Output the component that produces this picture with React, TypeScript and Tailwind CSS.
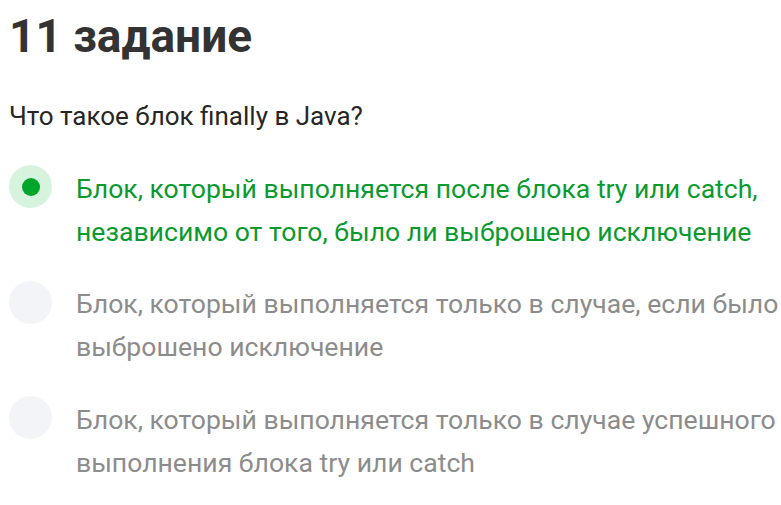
const options = [
  {
    text: 'Блок, который выполняется после блока try или catch, независимо от того, было ли выброшено исключение',
    correct: true,
  },
  {
    text: 'Блок, который выполняется только в случае, если было выброшено исключение',
    correct: false,
  },
  {
    text: 'Блок, который выполняется только в случае успешного выполнения блока try или catch',
    correct: false,
  },
]

export default function App() {
  return (
    <div className="min-h-[505px] w-[781px] bg-white pl-[9px] font-['Roboto',sans-serif]">
      <h1 className="pt-[8px] text-[46px] font-bold leading-[56px] text-[#333333]">11 задание</h1>
      <p className="mt-[36px] text-[26px] leading-[32px] text-[#262626]">Что такое блок finally в Java?</p>
      <div className="mt-[33px] flex flex-col gap-[28px]">
        {options.map((o) => (
          <div key={o.text} className="flex items-start gap-[24px]">
            <div
              className={`flex h-[43px] w-[43px] shrink-0 items-center justify-center rounded-full ${
                o.correct ? 'bg-[#d6f3de]' : 'bg-[#f3f4f8]'
              }`}
            >
              {o.correct && <div className="h-[18px] w-[18px] rounded-full bg-[#00a52b]" />}
            </div>
            <p
              className={`pt-[1.5px] text-[26.6px] leading-[43px] ${o.correct ? 'text-[#0a9a2e]' : 'text-[#8c8c8c]'}`}
            >
              {o.text}
            </p>
          </div>
        ))}
      </div>
    </div>
  )
}
